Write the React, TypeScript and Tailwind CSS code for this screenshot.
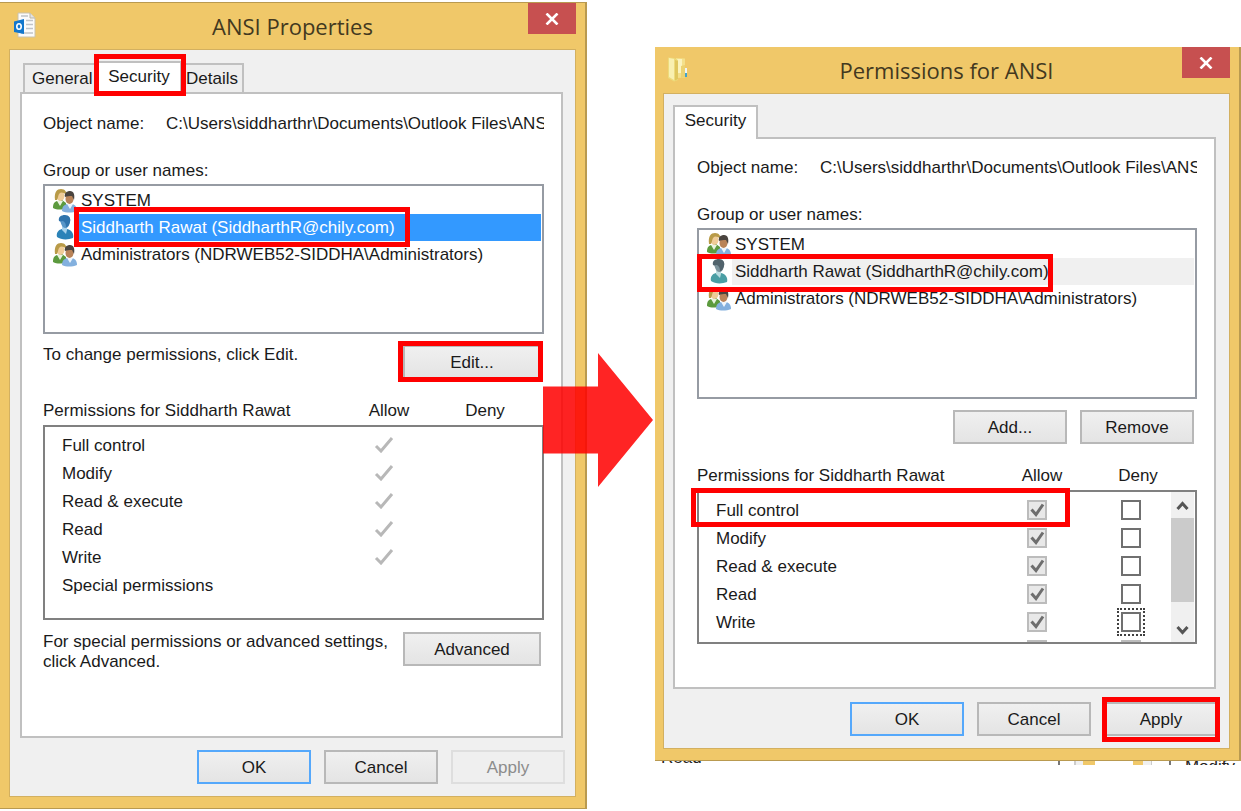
import type { ReactNode } from "react"
import clsx from "clsx"

interface User {
  name: string
  kind: "group" | "person"
}

const users: User[] = [
  { name: "SYSTEM", kind: "group" },
  { name: "Siddharth Rawat (SiddharthR@chily.com)", kind: "person" },
  { name: "Administrators (NDRWEB52-SIDDHA\\Administrators)", kind: "group" },
]

const permissions = ["Full control", "Modify", "Read & execute", "Read", "Write", "Special permissions"]

const objectPath = "C:\\Users\\siddharthr\\Documents\\Outlook Files\\ANSI.pst"

// Red callout frame, placed around its relative parent
function Callout({ className }: { className: string }) {
  return <span aria-hidden="true" className={clsx("absolute z-20 border-[5px] border-[#ff0000] pointer-events-none", className)} />
}

function OutlookFileIcon() {
  return (
    <svg width="22" height="26" viewBox="0 0 22 26" aria-hidden="true">
      <path d="M4 1h12l5 5v19H4z" fill="#fbfbfb" stroke="#c9c2ad" />
      <path d="M16 1v5h5" fill="#e4e4e4" stroke="#b9b4a6" />
      <path d="M7 4h7M12 8.500h7M12 12.500h7M12 16.500h7M7 21h12" stroke="#c0c3c8" strokeWidth="1.500" />
      <path d="M0 9.500L10 7v15L0 20z" fill="#1277cd" />
      <ellipse cx="5" cy="14.500" rx="2.200" ry="2.800" fill="none" stroke="#fff" strokeWidth="1.600" />
    </svg>
  )
}

function FolderIcon() {
  return (
    <svg width="21" height="26" viewBox="0 0 21 26" aria-hidden="true">
      <path d="M8 2l9 .5v19L9 22z" fill="#f4e08a" />
      <path d="M9 3h5v14H9z" fill="#fbf3bd" />
      <path d="M13 10l4-1v12l-4 1z" fill="#ecd271" />
      <path d="M0 1.500L6 2l4 2v20l-4 1.500-6-3.500z" fill="#eddb7c" />
      <path d="M1 2l5 1v21l-5-3z" fill="#f9f0b0" />
      <path d="M7 4l3 1v18l-3 1.500z" fill="#e0c65d" />
      <path d="M17 12h2v5h-2z" fill="#eef6f8" />
      <path d="M17 17h2v4h-2z" fill="#43a3c9" />
    </svg>
  )
}

function GroupIcon() {
  return (
    <svg width="25" height="24" viewBox="0 0 25 24" className="shrink-0" aria-hidden="true">
      <path d="M0 19c0-5 2-7 5-7l4-1 4 3v5c-4 2-9 2-13 0z" fill="#5c9a3e" />
      <path d="M4 12l3 5 3-5z" fill="#e9f3e0" />
      <ellipse cx="7.500" cy="7" rx="4" ry="5" fill="#efcc98" />
      <path d="M2 11C1 3 4 0 8 0s6 3 5 6c-3-3-5-3-7-1-1 2-1 4-2 6z" fill="#b99b48" />
      <path d="M9 22c0-5 3-7 6-7h3c4 0 6 3 6 7-5 2-11 2-15 0z" fill="#83b0de" />
      <path d="M14 15l3 5 3-5z" fill="#eef5fc" />
      <ellipse cx="16.500" cy="10" rx="4" ry="5" fill="#b98358" />
      <path d="M12 8c-1-4 2-6 5-6 4 0 5 4 4 9l-2-4c-3 0-5 0-7 1z" fill="#4a443f" />
    </svg>
  )
}

function PersonIcon({ selected }: { selected: boolean }) {
  const head = selected ? "#2f74ad" : "#51636c"
  const shade = selected ? "#5796c8" : "#7c929b"
  const body = selected ? "#2b83b8" : "#4a9ea4"
  return (
    <svg width="25" height="25" viewBox="0 0 25 25" className="shrink-0" aria-hidden="true">
      <path d="M4 22c-1-4 1-7 5-8h5c5 1 7 5 6 9-5 2-12 2-16-1z" fill={body} />
      <path d="M9 11h5v4l-1 4-4-4z" fill={selected ? "#a7d2ec" : "#b9dce0"} />
      <path d="M7 5c0-3 2-4 5-4 4 0 6 2 5 6-1 4-2 6-5 6-2 0-4-3-5-8z" fill={shade} />
      <path d="M6 6c-1-4 2-6 6-6s6 3 5 7c-1 3-2 5-4 5 0-3-1-5-3-6-1 0-3 1-4 0z" fill={head} />
    </svg>
  )
}

function CheckMark({ className }: { className: string }) {
  return (
    <svg width="20" height="16" viewBox="0 0 20 16" fill="none" className={className} aria-hidden="true">
      <path d="M2 9l5 5L18 1" stroke="currentColor" strokeWidth="3" />
    </svg>
  )
}

interface PushButtonProps {
  children: ReactNode
  className?: string
  variant?: "normal" | "default" | "disabled"
  callout?: string
}

function PushButton({ children, className, variant = "normal", callout }: PushButtonProps) {
  return (
    <button
      type="button"
      disabled={variant === "disabled"}
      className={clsx(
        "relative h-[34px] shrink-0 border-2 pt-0.5",
        variant === "normal" && "border-[#b8b8b8] bg-gradient-to-b from-[#f0f0f0] to-[#e4e4e4]",
        variant === "default" && "border-[#55a8fb] bg-gradient-to-b from-[#f0f0f0] to-[#e4e4e4]",
        variant === "disabled" && "border-[#dedede] bg-[#efefef] text-[#8c8c8c]",
        className
      )}
    >
      {children}
      {callout && <Callout className={callout} />}
    </button>
  )
}

interface DialogProps {
  title: string
  icon: ReactNode
  frame: string
  body: string
  children: ReactNode
}

function Dialog({ title, icon, frame, body, children }: DialogProps) {
  return (
    <section aria-label={title} className={clsx("bg-[#f0c869] border-r-2 border-b border-[#b99a50] pb-[11px]", frame)}>
      <header className="relative flex h-[46px] items-center justify-center">
        <span className="absolute left-[5px] top-[9px]">{icon}</span>
        <h1 className="font-['Open_Sans',sans-serif] text-[22px] leading-[44px] text-[#43391f]">{title}</h1>
        <button type="button" aria-label="Close" className="absolute right-0 top-0 flex h-[31px] w-12 items-center justify-center bg-[#c75050]">
          <svg width="14" height="12" viewBox="0 0 14 12" aria-hidden="true">
            <path d="M1.500 .5l11 11M12.500 .5l-11 11" stroke="#fff" strokeWidth="2.600" />
          </svg>
        </button>
      </header>
      <div className={clsx("border border-[#d3b060] bg-[#f0f0f0] pt-[11px] pb-3", body)}>{children}</div>
    </section>
  )
}

function ObjectName({ id }: { id: string }) {
  return (
    <div className="flex h-6 items-center">
      <label htmlFor={id} className="w-[123px] shrink-0">Object name:</label>
      <input id={id} readOnly value={objectPath} className="min-w-0 flex-1 bg-transparent outline-none" />
    </div>
  )
}

interface UserListProps {
  className: string
  focused: boolean
  callout: string
}

function UserList({ className, focused, callout }: UserListProps) {
  return (
    <>
      <h2 className="mt-[22px] h-6 leading-[26px]">Group or user names:</h2>
      <ul role="listbox" aria-label="Group or user names" className={clsx("mt-0.5 border-2 border-[#969ba3] bg-white pt-px pl-2 pr-px", className)}>
        {users.map((user) => {
          const selected = user.kind === "person"
          return (
            <li key={user.name} role="option" aria-selected={selected} className="flex h-[27px] items-center">
              {user.kind === "group" ? <GroupIcon /> : <PersonIcon selected={focused} />}
              <span
                className={clsx(
                  "h-[27px] flex-1 pl-[3px] leading-[28px]",
                  selected && (focused ? "bg-[#3399ff] text-white" : "bg-[#f0f0f0]")
                )}
              >
                <span className="relative inline-block h-[27px] whitespace-nowrap">
                  {user.name}
                  {selected && <Callout className={callout} />}
                </span>
              </span>
            </li>
          )
        })}
      </ul>
    </>
  )
}

function PermissionTable({ className, editable = false }: { className: string; editable?: boolean }) {
  return (
    <div className="relative mt-5">
      <table className="block">
        <thead className="block">
          <tr className="flex h-6 items-center pr-[11px]">
            <th className="flex-1 text-left font-normal">Permissions for Siddharth Rawat</th>
            <th className="w-24 font-normal">Allow</th>
            <th className="w-24 font-normal">Deny</th>
          </tr>
        </thead>
        <tbody className={clsx("mt-0.5 block overflow-hidden border-2 border-[#808080] bg-white pt-1", className)}>
          {permissions.map((name, i) => {
            const special = name === "Special permissions"
            return (
              <tr key={name} className="flex h-7 items-center pr-[17px]">
                <td className="flex-1 pt-px pl-[17px]">{editable && special ? null : name}</td>
                <td className="flex w-[94px] justify-center">
                  {editable ? (
                    <span className="relative flex">
                      <input
                        type="checkbox"
                        disabled
                        checked={!special}
                        readOnly
                        aria-label={`Allow ${name}`}
                        className="size-5 appearance-none border-2 border-[#bcbcbc] bg-[#e8e8e8]"
                      />
                      {!special && (
                        <svg viewBox="0 0 20 20" fill="none" className="absolute inset-0 size-5 text-[#6e6e6e]" aria-hidden="true">
                          <path d="M4.500 9.500l4.500 5L16 4.500" stroke="currentColor" strokeWidth="3" />
                        </svg>
                      )}
                    </span>
                  ) : (
                    !special && <CheckMark className="text-[#b8b8b8]" />
                  )}
                </td>
                <td className="flex w-[94px] justify-center">
                  {editable && (
                    <input
                      type="checkbox"
                      disabled={special}
                      aria-label={`Deny ${name}`}
                      className={clsx(
                        "size-5 appearance-none border-2",
                        special ? "border-[#bcbcbc] bg-[#e8e8e8]" : "border-[#707070] bg-white",
                        i === 4 && "outline-2 outline-offset-2 outline-dotted outline-[#404040]"
                      )}
                    />
                  )}
                </td>
              </tr>
            )
          })}
        </tbody>
      </table>
      {editable && (
        <>
          <div aria-hidden="true" className="absolute top-7 right-[3px] bottom-0.5 flex w-[23px] flex-col items-center justify-between bg-[#f0f0f0]">
            <svg width="13" height="26" viewBox="0 0 13 26" fill="none">
              <path d="M1.500 17l5-5.500 5 5.500" stroke="#555" strokeWidth="3" />
            </svg>
            <div className="mb-auto h-[84px] w-full bg-[#cbcbcb]" />
            <svg width="13" height="26" viewBox="0 0 13 26" fill="none">
              <path d="M1.500 11l5 5.500 5-5.500" stroke="#555" strokeWidth="3" />
            </svg>
          </div>
          <Callout className="top-6 -left-[6px] right-[127px] h-[39px]" />
        </>
      )}
    </div>
  )
}

function PropertiesDialog() {
  return (
    <Dialog title="ANSI Properties" icon={<OutlookFileIcon />} frame="mt-[2px] border-t pl-[9px] pr-[9px]" body="pl-[10px] pr-[12px]">
      <div role="tablist" className="flex h-[31px] items-end pl-[3px]">
        <button type="button" role="tab" className="h-[29px] w-[73px] border-2 border-b-0 border-[#c0c0c0] bg-[#eeeeee] pl-[7px] text-left">
          General
        </button>
        <button type="button" role="tab" aria-selected="true" className="relative z-10 -mb-0.5 h-[33px] w-[86px] border-2 border-b-0 border-[#c0c0c0] bg-white pb-1">
          Security
          <Callout className="-top-[9px] -right-[6px] -bottom-[2px] -left-[4px]" />
        </button>
        <button type="button" role="tab" className="h-[29px] w-[62px] border-2 border-b-0 border-l-0 border-[#c0c0c0] bg-[#eeeeee] text-center">
          Details
        </button>
      </div>
      <div role="tabpanel" className="border-2 border-[#c0c0c0] bg-white pt-[18px] pr-[17px] pb-16 pl-[21px]">
        <ObjectName id="properties-object" />
        <UserList className="h-[150px]" focused callout="-top-[7px] -bottom-[6px] -left-[7px] -right-[15px]" />
        <div className="mt-[9px] flex justify-between pr-[3px]">
          <p className="leading-6">To change permissions, click Edit.</p>
          <PushButton className="mt-0.5 w-[138px]" callout="-top-[6px] -right-[4px] -bottom-[5px] -left-[7px]">
            Edit...
          </PushButton>
        </div>
        <PermissionTable className="h-[195px]" />
        <div className="mt-3 flex justify-between pr-[3px]">
          <p className="w-[350px] leading-5">
            For special permissions or advanced settings, click Advanced.
          </p>
          <PushButton className="w-[138px]">Advanced</PushButton>
        </div>
      </div>
      <footer className="-mr-[2px] mt-3 flex justify-end gap-[13px]">
        <PushButton variant="default" className="w-[114px]">OK</PushButton>
        <PushButton className="w-[114px]">Cancel</PushButton>
        <PushButton variant="disabled" className="w-[114px]">Apply</PushButton>
      </footer>
    </Dialog>
  )
}

function PermissionsDialog() {
  return (
    <Dialog title="Permissions for ANSI" icon={<FolderIcon />} frame="pl-[8px] pr-[9px]" body="pl-[9px] pr-[13px]">
      <div role="tablist" className="flex h-8">
        <button type="button" role="tab" aria-selected="true" className="relative z-10 h-[34px] w-[85px] border-2 border-b-0 border-[#c0c0c0] bg-white pb-1">
          Security
        </button>
      </div>
      <div role="tabpanel" className="border-2 border-[#c0c0c0] bg-white pt-[17px] pr-[17px] pb-[43px] pl-[22px]">
        <ObjectName id="permissions-object" />
        <UserList className="h-[171px]" focused={false} callout="-top-[4px] -bottom-[7px] -left-[38px] -right-[4px]" />
        <div className="mt-[11px] flex justify-end gap-[13px] pr-[3px]">
          <PushButton className="w-[114px]">Add...</PushButton>
          <PushButton className="w-[114px]">Remove</PushButton>
        </div>
        <PermissionTable className="h-[154px]" editable />
      </div>
      <footer className="-mr-[2px] mt-[13px] flex justify-end gap-[13px]">
        <PushButton variant="default" className="w-[114px]">OK</PushButton>
        <PushButton className="w-[114px]">Cancel</PushButton>
        <PushButton className="w-[114px]" callout="-top-[7px] -right-[4px] -bottom-[8px] -left-[4px]">
          Apply
        </PushButton>
      </footer>
    </Dialog>
  )
}

// Sliver of the windows that lie behind the permissions dialog
function BackgroundSliver() {
  return (
    <div aria-hidden="true" className="flex h-1 items-start overflow-hidden pl-[6px] text-[#222]">
      <span className="-mt-[13px] leading-5">Read</span>
      <span className="ml-auto h-1 w-[2px] bg-[#777]" />
      <span className="ml-[14px] h-1 w-[9px] border-l-2 border-[#ccc] bg-[#f0f0f0]" />
      <span className="h-1 w-[12px] bg-[#f0c869]" />
      <span className="ml-[38px] h-1 w-[10px] bg-[#f0c869]" />
      <span className="h-1 w-[9px] border-r border-[#ccc] bg-[#f0f0f0]" />
      <span className="ml-[17px] h-1 w-[2px] bg-[#777]" />
      <span className="-mt-1 ml-[14px] mr-[6px] leading-5">Modify</span>
    </div>
  )
}

export default function App() {
  return (
    <main className="grid grid-cols-[587fr_68fr_586fr] items-start overflow-hidden bg-white font-['Liberation_Sans',Arial,sans-serif] text-[17px] text-[#1a1a1a]">
      <PropertiesDialog />
      <div className="relative self-stretch">
        <svg viewBox="0 0 110 134" className="absolute top-[353px] right-[2px] z-30 h-[134px] w-[110px]" aria-hidden="true">
          <path d="M0 33.500h55V0l55 67-55 67v-33.500H0z" fill="#ff0000" fillOpacity=".86" />
        </svg>
      </div>
      <div className="pt-[47px]">
        <PermissionsDialog />
        <BackgroundSliver />
      </div>
    </main>
  )
}
